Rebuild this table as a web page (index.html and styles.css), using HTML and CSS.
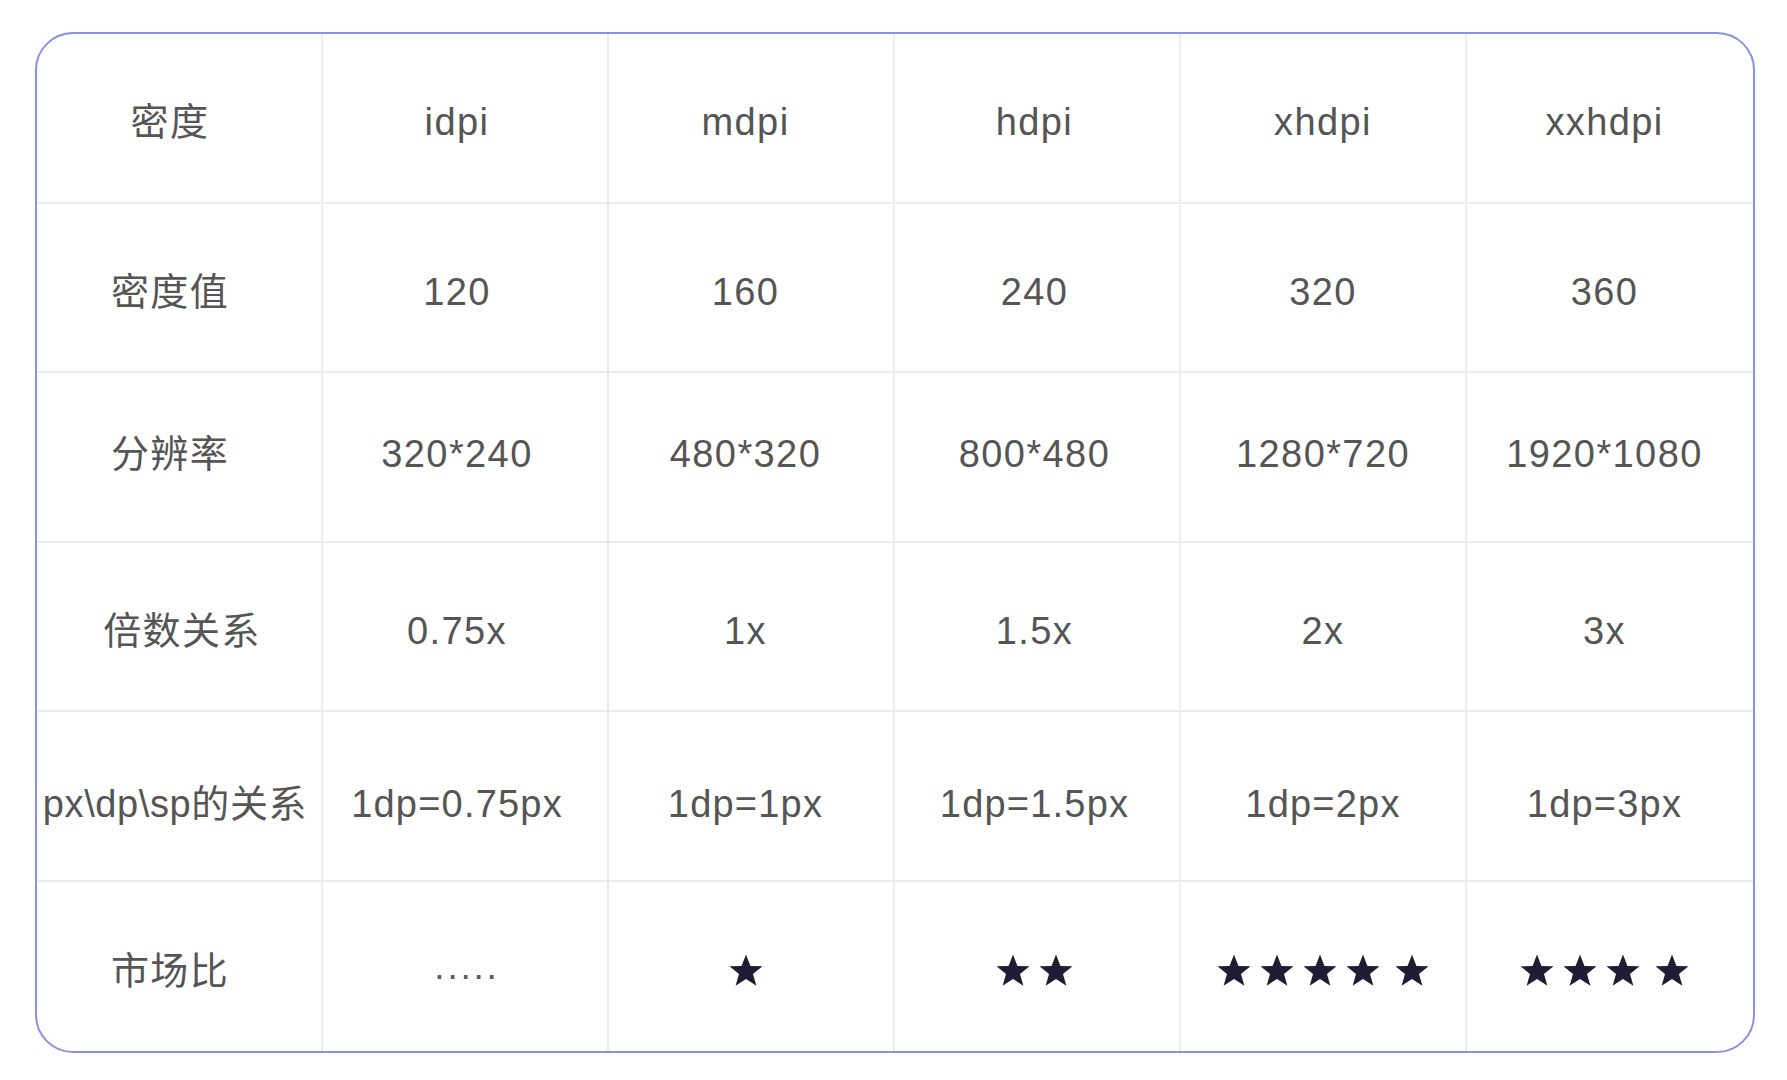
FILE: index.html
```html
<!DOCTYPE html>
<html lang="zh-CN">
<head>
<meta charset="utf-8">
<title>屏幕密度</title>
<link rel="stylesheet" href="styles.css">
</head>
<body>
<svg width="0" height="0" class="defs">
  <defs>
    <symbol id="star" viewBox="0 0 34 34">
      <path d="M17 1.5 L21.2 12.2 L32.6 12.6 L23.6 19.8 L26.8 31 L17 24.6 L7.2 31 L10.4 19.8 L1.4 12.6 L12.8 12.2 Z"/>
    </symbol>
  </defs>
</svg>
<div class="table">
  <div class="cell">密度</div>
  <div class="cell">idpi</div>
  <div class="cell">mdpi</div>
  <div class="cell">hdpi</div>
  <div class="cell">xhdpi</div>
  <div class="cell last-col">xxhdpi</div>

  <div class="cell">密度值</div>
  <div class="cell">120</div>
  <div class="cell">160</div>
  <div class="cell">240</div>
  <div class="cell">320</div>
  <div class="cell last-col">360</div>

  <div class="cell row-res">分辨率</div>
  <div class="cell row-res">320*240</div>
  <div class="cell row-res">480*320</div>
  <div class="cell row-res">800*480</div>
  <div class="cell row-res">1280*720</div>
  <div class="cell row-res last-col">1920*1080</div>

  <div class="cell label-ratio">倍数关系</div>
  <div class="cell">0.75x</div>
  <div class="cell">1x</div>
  <div class="cell">1.5x</div>
  <div class="cell">2x</div>
  <div class="cell last-col">3x</div>

  <div class="cell row-px label-px">px\dp\sp的关系</div>
  <div class="cell row-px">1dp=0.75px</div>
  <div class="cell row-px">1dp=1px</div>
  <div class="cell row-px">1dp=1.5px</div>
  <div class="cell row-px">1dp=2px</div>
  <div class="cell row-px last-col">1dp=3px</div>

  <div class="cell last-row">市场比</div>
  <div class="cell last-row"><span class="dots">.....</span></div>
  <div class="cell last-row"><span class="stars"><svg class="star"><use href="#star"/></svg></span></div>
  <div class="cell last-row"><span class="stars"><svg class="star"><use href="#star"/></svg><svg class="star"><use href="#star"/></svg></span></div>
  <div class="cell last-row"><span class="stars"><svg class="star"><use href="#star"/></svg><svg class="star"><use href="#star"/></svg><svg class="star"><use href="#star"/></svg><svg class="star"><use href="#star"/></svg><svg class="star gap"><use href="#star"/></svg></span></div>
  <div class="cell last-row last-col"><span class="stars"><svg class="star"><use href="#star"/></svg><svg class="star"><use href="#star"/></svg><svg class="star"><use href="#star"/></svg><svg class="star gap"><use href="#star"/></svg></span></div>
</div>
</body>
</html>
```

FILE: styles.css
```css
html, body {
  margin: 0;
  padding: 0;
  background: #ffffff;
}

body {
  font-family: "Liberation Sans", "Noto Sans CJK SC", sans-serif;
  color: #555555;
}

.defs {
  position: absolute;
  width: 0;
  height: 0;
  overflow: hidden;
}

.table {
  margin: 32px 0 0 35px;
  width: 1720px;
  height: 1021px;
  box-sizing: border-box;
  border: 2px solid #8c90e2;
  border-radius: 38px;
  overflow: hidden;
  display: grid;
  grid-template-columns: repeat(6, 1fr);
  grid-template-rows: repeat(6, 1fr);
}

.cell {
  display: flex;
  align-items: center;
  justify-content: center;
  border-right: 2px solid #ececec;
  border-bottom: 2px solid #ececec;
  font-size: 38px;
  line-height: 1;
  letter-spacing: 1.4px;
  white-space: nowrap;
  padding-top: 9px;
  min-width: 0;
}

/* per-column horizontal nudges */
.cell:nth-child(6n+1) { padding-right: 18px; }
.cell:nth-child(6n+2) { padding-right: 16px; }
.cell:nth-child(6n+3) { padding-right: 11px; }
.cell:nth-child(6n+4) { padding-right: 5px; }
.cell:nth-child(6n+6) { padding-right: 11px; }

.cell.row-res {
  padding-top: 0;
  padding-bottom: 6px;
}

.cell.row-px {
  padding-top: 17px;
  letter-spacing: 1.2px;
}

.cell.label-ratio {
  padding-right: 0;
  padding-left: 6px;
}

.cell.label-px {
  padding-right: 8px;
  letter-spacing: 0.6px;
}

.cell.last-col {
  border-right: none;
}

.cell.last-row {
  border-bottom: none;
}

.dots {
  letter-spacing: 2.8px;
  font-size: 37px;
  color: #5a5a5a;
  transform: translateY(-4px);
  padding-left: 20px;
}

.stars {
  display: flex;
  gap: 7px;
  align-items: center;
}

.star {
  width: 36px;
  height: 36px;
  fill: #1f1d33;
}

.star.gap {
  margin-left: 6px;
}
```
